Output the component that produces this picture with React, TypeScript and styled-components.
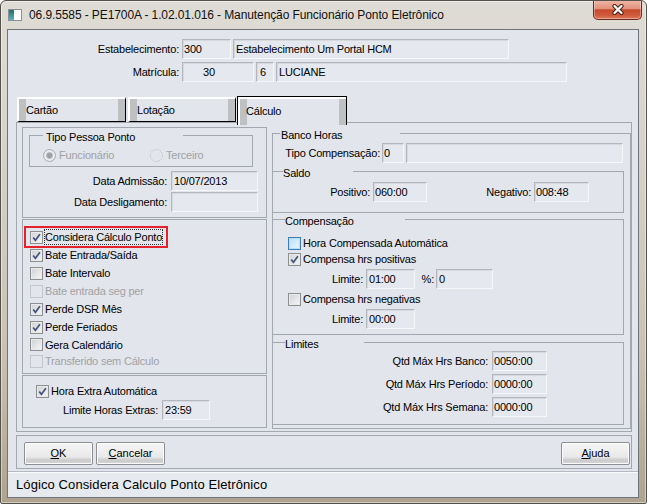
import React from 'react';
import styled, { createGlobalStyle, css } from 'styled-components';

const BG = '#e2e5eb';
const LINE = '#a2a7b0';
const MUTED = '#a0a2a6';
const STRIP = '#bfc0c2';

const GlobalStyles = createGlobalStyle`
  * { box-sizing: border-box; }
  html, body { margin: 0; padding: 0; }
  body {
    background: #ffffff;
    font-family: "Liberation Sans", Arial, sans-serif;
    font-size: 11px;
    letter-spacing: -0.2px;
    color: #000;
  }
`;

const Window = styled.div`
  width: 647px;
  height: 504px;
  border: 1px solid #55514b;
  border-radius: 6px 6px 2px 2px;
  background: linear-gradient(180deg, #dfdcd5 0%, #d6d2c9 30%, #c9c2b4 70%, #ada38f 100%);
  box-shadow: inset 0 0 0 1px rgba(255, 255, 255, 0.45);
  display: flex;
  flex-direction: column;
  overflow: hidden;
`;

const TitleBar = styled.div`
  height: 28px;
  flex: none;
  display: flex;
  align-items: center;
  padding-left: 7px;
`;

const TitleText = styled.span`
  margin-left: 7px;
  font-size: 12px;
  letter-spacing: -0.1px;
  color: #111;
  white-space: nowrap;
`;

const CloseButton = styled.div`
  align-self: flex-start;
  margin: -1px 4px 0 auto;
  width: 49px;
  height: 20px;
  border: 1px solid #6b2a1d;
  border-top: none;
  border-radius: 0 0 5px 5px;
  background: linear-gradient(180deg, #efb9aa 0%, #e2917a 45%, #c84a2e 52%, #cf5a3c 80%, #dd7a5c 100%);
  box-shadow: inset 0 0 0 1px rgba(255, 255, 255, 0.35);
  display: flex;
  align-items: center;
  justify-content: center;
`;

const Body = styled.div`
  flex: none;
  padding: 0 7px 0 6px;
`;

const Client = styled.div`
  width: 632px;
  height: 469px;
  border: 1px solid #6f737a;
  background: ${BG};
  display: flex;
  flex-direction: column;
`;

const Header = styled.div`
  padding-top: 9px;
  display: flex;
  flex-direction: column;
  gap: 3px;
`;

const FormRow = styled.div<{ $mt?: number; $pl?: number }>`
  display: flex;
  align-items: center;
  height: 20px;
  flex: none;
  margin-top: ${(p) => p.$mt ?? 0}px;
  padding-left: ${(p) => p.$pl ?? 0}px;
`;

const Label = styled.span<{ $w: number; $pr?: number }>`
  width: ${(p) => p.$w}px;
  flex: none;
  text-align: right;
  padding-right: ${(p) => p.$pr ?? 3}px;
  white-space: nowrap;
`;

const Field = styled.div<{ $w: number; $ml?: number; $pl?: number }>`
  width: ${(p) => p.$w}px;
  height: 20px;
  flex: none;
  margin-left: ${(p) => p.$ml ?? 0}px;
  padding-left: ${(p) => p.$pl ?? 1}px;
  border: 1px solid;
  border-color: #b3b6bc #f6f7f9 #f6f7f9 #b3b6bc;
  box-shadow: inset 1px 1px 0 #d6d9de;
  background: #e5e8ee;
  line-height: 18px;
  white-space: nowrap;
  overflow: hidden;
`;

const TabStrip = styled.div`
  display: flex;
  align-items: flex-end;
  height: 26px;
  flex: none;
  margin: 14px 0 0 9px;
`;

const Tab = styled.div<{ $w: number; $ml?: number; $active?: boolean }>`
  width: ${(p) => p.$w}px;
  flex: none;
  display: flex;
  align-items: center;
  margin-left: ${(p) => p.$ml ?? 0}px;
  ${(p) =>
    p.$active
      ? css`
          height: 29px;
          margin-bottom: -3px;
          position: relative;
          z-index: 1;
          border: 1px solid #000;
          border-bottom: none;
          padding-left: 8px;
          box-shadow: inset 2px 2px 0 #fff;
          background: linear-gradient(90deg, ${STRIP} 0 9px, ${BG} 9px calc(100% - 7px), ${STRIP} calc(100% - 7px));
        `
      : css`
          height: 25px;
          border-top: 2px solid #fff;
          border-left: 2px solid #fff;
          border-right: 1px solid #000;
          border-bottom: 1px solid #000;
          padding-left: 7px;
          background: linear-gradient(90deg, ${STRIP} 0 7px, ${BG} 7px calc(100% - 7px), ${STRIP} calc(100% - 7px));
        `}
`;

const TabPanel = styled.div`
  margin-left: 8px;
  width: 616px;
  height: 310px;
  flex: none;
  border: 1px solid ${LINE};
  padding: 4px 0 0 5px;
  display: flex;
  align-items: flex-start;
  gap: 5px;
`;

const LeftCol = styled.div`
  width: 245px;
  flex: none;
  display: flex;
  flex-direction: column;
  gap: 1px;
`;

const Pane = styled.div<{ $h: number; $pt?: number; $pl?: number }>`
  height: ${(p) => p.$h}px;
  flex: none;
  border: 1px solid ${LINE};
  padding-top: ${(p) => p.$pt ?? 0}px;
  padding-left: ${(p) => p.$pl ?? 0}px;
  display: flex;
  flex-direction: column;
`;

const Group = styled.div<{ $w: number; $ml?: number; $mt?: number; $pb?: number }>`
  width: ${(p) => p.$w}px;
  flex: none;
  margin-left: ${(p) => p.$ml ?? 0}px;
  margin-top: ${(p) => p.$mt ?? 0}px;
  padding-bottom: ${(p) => p.$pb ?? 0}px;
  border: 1px solid ${LINE};
  display: flex;
  flex-direction: column;
`;

const GroupTitle = styled.div<{ $ml: number; $w: number; $pl?: number }>`
  height: 13px;
  line-height: 13px;
  flex: none;
  margin: -5px 0 1px ${(p) => p.$ml}px;
  width: ${(p) => p.$w}px;
  padding-left: ${(p) => p.$pl ?? 0}px;
  background: ${BG};
  white-space: nowrap;
`;

const CheckRow = styled.div<{ $h?: number; $mt?: number; $pl?: number }>`
  height: ${(p) => p.$h ?? 18}px;
  flex: none;
  margin-top: ${(p) => p.$mt ?? 0}px;
  padding-left: ${(p) => p.$pl ?? 0}px;
  display: flex;
  align-items: center;
  gap: 2px;
`;

const Box = styled.span<{ $disabled?: boolean; $hot?: boolean }>`
  width: 13px;
  height: 13px;
  flex: none;
  display: inline-flex;
  align-items: center;
  justify-content: center;
  border: 1px solid ${(p) => (p.$hot ? '#3d7fb2' : p.$disabled ? '#c4c6ca' : '#8e8f90')};
  box-shadow: inset 0 0 0 1px ${(p) => (p.$hot ? '#b7def6' : p.$disabled ? BG : '#e9eaec')};
  background: ${(p) =>
    p.$hot
      ? 'linear-gradient(135deg, #b9dff6, #eaf6fd)'
      : p.$disabled
      ? BG
      : 'linear-gradient(135deg, #cfd1d4, #f6f6f7)'};
`;

const CheckText = styled.span<{ $disabled?: boolean }>`
  color: ${(p) => (p.$disabled ? MUTED : '#000')};
  white-space: nowrap;
`;

const Highlight = styled.div`
  align-self: flex-start;
  margin: -2px 0 -2px -6px;
  border: 2px solid #e3222b;
  padding: 0 3px 0 4px;
`;

const FocusText = styled.span`
  border: 1px dotted #333;
  line-height: 14px;
  margin-left: -1px;
  white-space: nowrap;
`;

const RadioRow = styled.div`
  height: 16px;
  flex: none;
  margin: 2px 0 3px;
  padding-left: 13px;
  display: flex;
  align-items: center;
`;

const RadioItem = styled.span<{ $w?: number }>`
  width: ${(p) => (p.$w ? `${p.$w}px` : 'auto')};
  display: flex;
  align-items: center;
  gap: 3px;
  color: ${MUTED};
`;

const RadioCircle = styled.span<{ $on?: boolean }>`
  width: 13px;
  height: 13px;
  flex: none;
  border-radius: 50%;
  border: 1px ${(p) => (p.$on ? 'solid #a9acb1' : 'dotted #b8bbc0')};
  background: ${(p) =>
    p.$on ? 'radial-gradient(circle, #9ea1a6 0 2.5px, #c7cacf 3.2px, #eceef1 4px, #e4e6ea 6px)' : BG};
`;

const ButtonBar = styled.div`
  margin: 3px 0 0 8px;
  width: 616px;
  height: 34px;
  flex: none;
  border: 1px solid ${LINE};
  padding: 6px 1px 0 7px;
  display: flex;
  gap: 3px;
`;

const Button = styled.div<{ $push?: boolean }>`
  width: 69px;
  height: 23px;
  flex: none;
  margin-left: ${(p) => (p.$push ? 'auto' : '0')};
  border: 1px solid #8d8f93;
  border-radius: 2px;
  background: linear-gradient(180deg, #f6f6f6 0%, #e9e9e9 65%, #cbcbcb 82%, #d8d8d8 100%);
  box-shadow: inset 0 0 0 1px #fbfbfb;
  display: flex;
  align-items: center;
  justify-content: center;
  padding-bottom: 2px;
  letter-spacing: 0;
`;

const StatusBar = styled.div`
  margin-top: 2px;
  height: 26px;
  flex: none;
  border-top: 1px solid #b4b9c1;
  box-shadow: inset 0 1px 0 #fbfbfc;
  background: #e6e9ee;
  padding-left: 8px;
  display: flex;
  align-items: center;
  font-size: 13px;
  letter-spacing: 0.1px;
`;

const Check = () => (
  <svg width="11" height="11" viewBox="0 0 11 11">
    <path d="M2.2 5.4 L4.4 8.3 L8.9 2.2" fill="none" stroke="#44547c" strokeWidth="1.7" />
  </svg>
);

type CheckProps = { label: string; checked?: boolean; disabled?: boolean; hot?: boolean; h?: number; mt?: number; pl?: number };

const CheckItem = ({ label, checked, disabled, hot, h, mt, pl }: CheckProps) => (
  <CheckRow $h={h} $mt={mt} $pl={pl}>
    <Box $disabled={disabled} $hot={hot}>{checked && <Check />}</Box>
    <CheckText $disabled={disabled}>{label}</CheckText>
  </CheckRow>
);

const calcFlags: CheckProps[] = [
  { label: 'Bate Entrada/Saída', checked: true },
  { label: 'Bate Intervalo' },
  { label: 'Bate entrada seg per', disabled: true },
  { label: 'Perde DSR Mês', checked: true },
  { label: 'Perde Feriados', checked: true },
  { label: 'Gera Calendário', h: 17 },
  { label: 'Transferido sem Cálculo', disabled: true, h: 16 },
];

const limites = [
  { label: 'Qtd Máx Hrs Banco:', value: '0050:00', mt: -1 },
  { label: 'Qtd Máx Hrs Período:', value: '0000:00', mt: 3 },
  { label: 'Qtd Máx Hrs Semana:', value: '0000:00', mt: 3 },
];

const App: React.FC = () => {
  return (
    <>
      <GlobalStyles />
      <Window>
        <TitleBar>
          <svg width="14" height="14" viewBox="0 0 14 14">
            <defs>
              <linearGradient id="ico" x1="0" y1="0" x2="0" y2="1">
                <stop offset="0" stopColor="#1d6f66" />
                <stop offset="1" stopColor="#5fb2c6" />
              </linearGradient>
            </defs>
            <rect x="0.5" y="1.5" width="13" height="11" fill="#fdfdfd" stroke="#8c9096" />
            <rect x="1" y="2" width="5" height="10" fill="url(#ico)" />
          </svg>
          <TitleText>06.9.5585 - PE1700A - 1.02.01.016 - Manutenção Funcionário Ponto Eletrônico</TitleText>
          <CloseButton>
            <svg width="14" height="11" viewBox="0 0 14 11">
              <path d="M3.5 2 L10.5 9 M10.5 2 L3.5 9" stroke="#4a1c12" strokeWidth="4.2" strokeLinecap="round" />
              <path d="M3.5 2 L10.5 9 M10.5 2 L3.5 9" stroke="#ffffff" strokeWidth="2.3" strokeLinecap="round" />
            </svg>
          </CloseButton>
        </TitleBar>
        <Body>
          <Client>
            <Header>
              <FormRow>
                <Label $w={174}>Estabelecimento:</Label>
                <Field $w={49}>300</Field>
                <Field $w={276} $ml={2} $pl={2}>Estabelecimento Um Portal HCM</Field>
              </FormRow>
              <FormRow>
                <Label $w={174}>Matrícula:</Label>
                <Field $w={72} $pl={20}>30</Field>
                <Field $w={18} $ml={2} $pl={3}>6</Field>
                <Field $w={291} $ml={2} $pl={2}>LUCIANE</Field>
              </FormRow>
            </Header>

            <TabStrip>
              <Tab $w={109}>Cartão</Tab>
              <Tab $w={108} $ml={2}>Lotação</Tab>
              <Tab $w={110} $ml={1} $active>Cálculo</Tab>
            </TabStrip>

            <TabPanel>
              <LeftCol>
                <Pane $h={91}>
                  <Group $w={224} $ml={6} $mt={7}>
                    <GroupTitle $ml={13} $w={140} $pl={3}>Tipo Pessoa Ponto</GroupTitle>
                    <RadioRow>
                      <RadioItem $w={107}>
                        <RadioCircle $on />
                        Funcionário
                      </RadioItem>
                      <RadioItem>
                        <RadioCircle />
                        Terceiro
                      </RadioItem>
                    </RadioRow>
                  </Group>
                  <FormRow $mt={4}>
                    <Label $w={148} $pr={4}>Data Admissão:</Label>
                    <Field $w={87} $pl={2}>10/07/2013</Field>
                  </FormRow>
                  <FormRow $mt={1}>
                    <Label $w={148} $pr={4}>Data Desligamento:</Label>
                    <Field $w={87} />
                  </FormRow>
                </Pane>

                <Pane $h={155} $pt={8} $pl={7}>
                  <Highlight>
                    <CheckRow>
                      <Box><Check /></Box>
                      <FocusText>Considera Cálculo Ponto</FocusText>
                    </CheckRow>
                  </Highlight>
                  {calcFlags.map((f) => (
                    <CheckItem key={f.label} {...f} />
                  ))}
                </Pane>

                <Pane $h={53} $pt={6}>
                  <CheckItem label="Hora Extra Automática" checked pl={13} />
                  <FormRow>
                    <Label $w={139} $pr={4}>Limite Horas Extras:</Label>
                    <Field $w={48} $pl={2}>23:59</Field>
                  </FormRow>
                </Pane>
              </LeftCol>

              <Group $w={359} $mt={6} $pb={3}>
                <GroupTitle $ml={7} $w={120} $pl={1}>Banco Horas</GroupTitle>
                <FormRow>
                  <Label $w={109} $pr={2}>Tipo Compensação:</Label>
                  <Field $w={22}>0</Field>
                  <Field $w={217} $ml={2} />
                </FormRow>

                <Group $w={352} $ml={-1} $mt={8} $pb={10}>
                  <GroupTitle $ml={10} $w={70}>Saldo</GroupTitle>
                  <FormRow $mt={1}>
                    <Label $w={100}>Positivo:</Label>
                    <Field $w={54}>060:00</Field>
                    <Label $w={107}>Negativo:</Label>
                    <Field $w={55}>008:48</Field>
                  </FormRow>
                </Group>

                <Group $w={352} $ml={-1} $mt={6} $pb={5}>
                  <GroupTitle $ml={12} $w={120}>Compensação</GroupTitle>
                  <CheckItem label="Hora Compensada Automática" hot h={16} mt={6} pl={15} />
                  <CheckItem label="Compensa hrs positivas" checked h={16} pl={15} />
                  <FormRow $mt={2}>
                    <Label $w={93}>Limite:</Label>
                    <Field $w={49} $pl={2}>01:00</Field>
                    <Label $w={21} $pr={2}>%:</Label>
                    <Field $w={57} $pl={2}>0</Field>
                  </FormRow>
                  <CheckItem label="Compensa hrs negativas" h={16} mt={2} pl={15} />
                  <FormRow $mt={2}>
                    <Label $w={93}>Limite:</Label>
                    <Field $w={49} $pl={2}>00:00</Field>
                  </FormRow>
                </Group>

                <Group $w={352} $ml={-1} $mt={7} $pb={7}>
                  <GroupTitle $ml={12} $w={79}>Limites</GroupTitle>
                  {limites.map((l) => (
                    <FormRow key={l.label} $mt={l.mt}>
                      <Label $w={219} $pr={4}>{l.label}</Label>
                      <Field $w={55}>{l.value}</Field>
                    </FormRow>
                  ))}
                </Group>
              </Group>
            </TabPanel>

            <ButtonBar>
              <Button><span><u>O</u>K</span></Button>
              <Button><span><u>C</u>ancelar</span></Button>
              <Button $push><span><u>A</u>juda</span></Button>
            </ButtonBar>

            <StatusBar>Lógico Considera Calculo Ponto Eletrônico</StatusBar>
          </Client>
        </Body>
      </Window>
    </>
  );
};

export default App;
